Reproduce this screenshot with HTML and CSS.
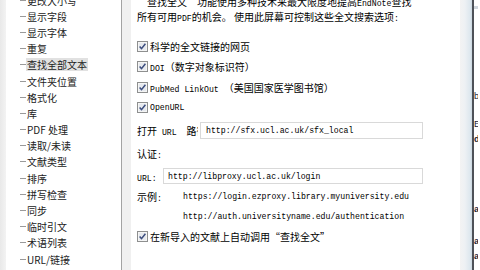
FILE: index.html
```html
<!DOCTYPE html>
<html lang="zh-CN">
<head>
<meta charset="utf-8">
<title>查找全文</title>
<link rel="stylesheet" href="styles.css">
</head>
<body>
<div class="window">
  <div class="edge"></div>
  <nav class="tree">
    <ul class="tree-list">
      <li class="node"><span class="node-text">更改大小写</span></li>
      <li class="node"><span class="node-text">显示字段</span></li>
      <li class="node"><span class="node-text">显示字体</span></li>
      <li class="node"><span class="node-text">重复</span></li>
      <li class="node"><span class="node-text selected">查找全部文本</span></li>
      <li class="node"><span class="node-text">文件夹位置</span></li>
      <li class="node"><span class="node-text">格式化</span></li>
      <li class="node"><span class="node-text">库</span></li>
      <li class="node"><span class="node-text">PDF 处理</span></li>
      <li class="node"><span class="node-text">读取/未读</span></li>
      <li class="node"><span class="node-text">文献类型</span></li>
      <li class="node"><span class="node-text">排序</span></li>
      <li class="node"><span class="node-text">拼写检查</span></li>
      <li class="node"><span class="node-text">同步</span></li>
      <li class="node"><span class="node-text">临时引文</span></li>
      <li class="node"><span class="node-text">术语列表</span></li>
      <li class="node"><span class="node-text">URL/链接</span></li>
    </ul>
  </nav>
  <div class="gutter"></div>
  <main class="panel">
    <p class="intro">“查找全文”功能使用多种技术来最大限度地提高<span class="lat">EndNote</span>查找<br>所有可用<span class="lat">PDF</span>的机会。 使用此屏幕可控制这些全文搜索选项<span class="lat">:</span></p>
    <div class="checks">
      <label class="check"><svg class="box" width="11" height="11" viewBox="0 0 11 11"><rect x="0.5" y="0.5" width="10" height="10" fill="#f4f4f4" stroke="#8e8f8f"/><rect x="1.5" y="1.5" width="8" height="8" fill="#e6e9ee" stroke="#f8f8f8" stroke-width="0.6"/><path d="M2.6 5.6 L4.5 7.6 L8.4 2.8" fill="none" stroke="#3b4d7e" stroke-width="1.5"/></svg><span>科学的全文链接的网页</span></label>
      <label class="check"><svg class="box" width="11" height="11" viewBox="0 0 11 11"><rect x="0.5" y="0.5" width="10" height="10" fill="#f4f4f4" stroke="#8e8f8f"/><rect x="1.5" y="1.5" width="8" height="8" fill="#e6e9ee" stroke="#f8f8f8" stroke-width="0.6"/><path d="M2.6 5.6 L4.5 7.6 L8.4 2.8" fill="none" stroke="#3b4d7e" stroke-width="1.5"/></svg><span><span class="lat">DOI</span>（数字对象标识符）</span></label>
      <label class="check"><svg class="box" width="11" height="11" viewBox="0 0 11 11"><rect x="0.5" y="0.5" width="10" height="10" fill="#f4f4f4" stroke="#8e8f8f"/><rect x="1.5" y="1.5" width="8" height="8" fill="#e6e9ee" stroke="#f8f8f8" stroke-width="0.6"/><path d="M2.6 5.6 L4.5 7.6 L8.4 2.8" fill="none" stroke="#3b4d7e" stroke-width="1.5"/></svg><span><span class="lat">PubMed LinkOut </span>（美国国家医学图书馆）</span></label>
      <label class="check"><svg class="box" width="11" height="11" viewBox="0 0 11 11"><rect x="0.5" y="0.5" width="10" height="10" fill="#f4f4f4" stroke="#8e8f8f"/><rect x="1.5" y="1.5" width="8" height="8" fill="#e6e9ee" stroke="#f8f8f8" stroke-width="0.6"/><path d="M2.6 5.6 L4.5 7.6 L8.4 2.8" fill="none" stroke="#3b4d7e" stroke-width="1.5"/></svg><span class="lat">OpenURL</span></label>
    </div>
    <div class="field open-row">
      <span class="flabel open-label">打开<span class="lat gap"> URL  </span>路径</span>
      <div class="input open-input"><span class="lat">http://sfx.ucl.ac.uk/sfx_local</span></div>
    </div>
    <div class="heading">认证<span class="lat">:</span></div>
    <div class="field url-row">
      <span class="flabel url-label"><span class="lat">URL:</span></span>
      <div class="input url-input"><span class="lat">http://libproxy.ucl.ac.uk/login</span></div>
    </div>
    <div class="example">
      <span class="ex-label">示例<span class="lat">:</span></span>
      <span class="lat">https://login.ezproxy.library.myuniversity.edu</span>
    </div>
    <div class="example second">
      <span class="lat">http://auth.universityname.edu/authentication</span>
    </div>
    <label class="check last"><svg class="box" width="11" height="11" viewBox="0 0 11 11"><rect x="0.5" y="0.5" width="10" height="10" fill="#f4f4f4" stroke="#8e8f8f"/><rect x="1.5" y="1.5" width="8" height="8" fill="#e6e9ee" stroke="#f8f8f8" stroke-width="0.6"/><path d="M2.6 5.6 L4.5 7.6 L8.4 2.8" fill="none" stroke="#3b4d7e" stroke-width="1.5"/></svg><span>在新导入的文献上自动调用“查找全文”</span></label>
  </main>
  <div class="frame"></div>
  <div class="behind">
    <span class="frag f1">bi</span>
    <span class="frag f2">E</span>
    <span class="frag f3">d</span>
    <span class="frag f4">a</span>
    <span class="frag f5">a</span>
    <span class="frag f6">a</span>
  </div>
</div>
</body>
</html>
```

FILE: styles.css
```css
* { box-sizing: border-box; }
html, body {
  margin: 0;
  padding: 0;
  width: 480px;
  height: 270px;
  overflow: hidden;
  background: #ffffff;
}
body {
  font-family: "Noto Sans CJK SC", "Noto Sans", sans-serif;
  font-size: 10px;
  color: #111;
}
.window {
  display: flex;
  width: 480px;
  height: 270px;
  overflow: hidden;
}
.edge {
  width: 6px;
  flex: none;
  background: linear-gradient(to right, #e9e9e9, #f3f3f3);
}
.tree {
  width: 116px;
  flex: none;
  background: #fff;
  border-right: 1px solid #a3a3a3;
  overflow: hidden;
}
.tree-list {
  list-style: none;
  margin: -8px 0 0 0;
  padding: 0 0 0 14px;
}
.node {
  display: flex;
  align-items: center;
  height: 16.2px;
  color: #222;
}
.node::before {
  content: "";
  width: 6px;
  height: 1px;
  background: #9a9a9a;
  flex: none;
}
.node-text {
  line-height: 13px;
  padding: 0 1px;
  white-space: nowrap;
}
.node-text.selected {
  background: #e1e1e1;
}
.gutter {
  width: 9px;
  flex: none;
  background: #f0f0f0;
}
.panel {
  width: 329px;
  flex: none;
  background: #fff;
  padding-left: 6px;
  display: flex;
  flex-direction: column;
  color: #000;
}
.lat {
  font-family: "Liberation Mono", monospace;
  font-size: 8.2px;
}
.gap { white-space: pre; }
.intro {
  margin: -5px 0 0 0;
  line-height: 13px;
  white-space: nowrap;
}
.checks {
  margin-top: 11px;
  display: flex;
  flex-direction: column;
}
.check {
  display: flex;
  align-items: center;
  height: 20.5px;
  white-space: nowrap;
}
.box {
  flex: none;
  margin-right: 2px;
}
.field {
  display: flex;
  align-items: center;
}
.open-row {
  margin-top: 4px;
  height: 17px;
}
.flabel {
  flex: none;
  overflow: hidden;
  white-space: nowrap;
}
.open-label { width: 61px; margin-right: 2px; }
.url-label { width: 26px; }
.input {
  height: 17px;
  border: 1px solid #d9d9d9;
  background: #fff;
  display: flex;
  align-items: center;
  white-space: nowrap;
}
.open-input {
  width: 223px;
  padding-left: 5px;
}
.heading {
  margin-top: 7px;
  height: 16px;
  line-height: 16px;
}
.url-row {
  margin-top: 6px;
  height: 16px;
}
.url-input {
  height: 16px;
  width: 260px;
  padding-left: 4px;
}
.example {
  display: flex;
  align-items: center;
  height: 16px;
  margin-top: 4px;
  white-space: nowrap;
}
.ex-label {
  width: 46px;
  flex: none;
}
.example.second {
  padding-left: 46px;
}
.check.last {
  margin-top: 2px;
  height: 20px;
}
.frame {
  width: 14px;
  flex: none;
  background: linear-gradient(to right, #f3f3f3 0%, #eef1f4 40%, #dde7ee 85%, #c9d6df 100%);
  border-right: 2px solid #4d5158;
}
.behind {
  width: 4px;
  flex: none;
  background: #fff;
  display: flex;
  flex-direction: column;
  overflow: hidden;
  font-family: "Liberation Sans", sans-serif;
  font-size: 9px;
  font-weight: bold;
  color: #223;
  border-top: 6px solid #fff;
  box-shadow: inset 0 3px 0 #cfd6dd;
}
.frag {
  height: 11px;
  line-height: 11px;
  white-space: nowrap;
}
.f1 { margin-top: 85px; font-weight: normal; }
.f2 { margin-top: 17px; font-weight: normal; }
.f3 { margin-top: 4px; }
.f4 { margin-top: 59px; }
.f5 { margin-top: 21px; }
.f6 { margin-top: 4px; }
```
